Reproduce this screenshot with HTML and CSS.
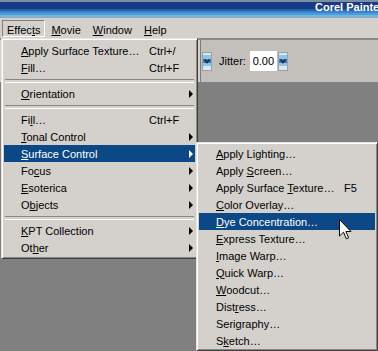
FILE: index.html
```html
<!DOCTYPE html>
<html>
<head>
<meta charset="utf-8">
<link rel="stylesheet" href="styles.css">
</head>
<body>
<div class="screen">
  <div class="titlebar"><span class="title">Corel Painter</span></div>
  <div class="menubar">
    <span class="mb pressed">Effec<u>t</u>s</span>
    <span class="mb"><u>M</u>ovie</span>
    <span class="mb"><u>W</u>indow</span>
    <span class="mb"><u>H</u>elp</span>
  </div>
  <div class="toolstrip">
    <div class="toolgap"></div>
    <div class="toolbar">
      <svg class="spin" width="10" height="19" viewBox="0 0 10 19">
        <rect width="10" height="19" fill="#dde5ee"/>
        <rect y="3" width="10" height="4" fill="#8cc6ea"/>
        <rect y="7" width="10" height="4" fill="#3f7fb8"/>
        <rect y="11" width="10" height="3" fill="#8cc6ea"/>
        <path d="M2.5 7.5 L5 10.5 L7.5 7.5" stroke="#1c2a3a" stroke-width="1.6" fill="none"/>
        <rect x="0.5" y="0.5" width="9" height="18" fill="none" stroke="#98a0a8"/>
      </svg>
      <span class="jlabel">Jitter:</span>
      <span class="field">0.00</span>
      <svg class="spin" width="10" height="19" viewBox="0 0 10 19">
        <rect width="10" height="19" fill="#dde5ee"/>
        <rect y="3" width="10" height="4" fill="#8cc6ea"/>
        <rect y="7" width="10" height="4" fill="#3f7fb8"/>
        <rect y="11" width="10" height="3" fill="#8cc6ea"/>
        <path d="M2.5 7.5 L5 10.5 L7.5 7.5" stroke="#1c2a3a" stroke-width="1.6" fill="none"/>
        <rect x="0.5" y="0.5" width="9" height="18" fill="none" stroke="#98a0a8"/>
      </svg>
    </div>
  </div>

  <div class="menu main">
    <div class="item"><span class="lbl"><u>A</u>pply Surface Texture…</span><span class="key">Ctrl+/</span></div>
    <div class="item"><span class="lbl"><u>F</u>ill…</span><span class="key">Ctrl+F</span></div>
    <div class="sep"></div>
    <div class="item"><span class="lbl"><u>O</u>rientation</span><span class="key"></span><span class="arrow"></span></div>
    <div class="sep"></div>
    <div class="item"><span class="lbl">Fi<u>l</u>l…</span><span class="key">Ctrl+F</span></div>
    <div class="item"><span class="lbl"><u>T</u>onal Control</span><span class="key"></span><span class="arrow"></span></div>
    <div class="item active"><span class="lbl"><u>S</u>urface Control</span><span class="key"></span><span class="arrow"></span></div>
    <div class="item"><span class="lbl">Fo<u>c</u>us</span><span class="key"></span><span class="arrow"></span></div>
    <div class="item"><span class="lbl"><u>E</u>soterica</span><span class="key"></span><span class="arrow"></span></div>
    <div class="item"><span class="lbl">O<u>b</u>jects</span><span class="key"></span><span class="arrow"></span></div>
    <div class="sep"></div>
    <div class="item"><span class="lbl"><u>K</u>PT Collection</span><span class="key"></span><span class="arrow"></span></div>
    <div class="item"><span class="lbl">Ot<u>h</u>er</span><span class="key"></span><span class="arrow"></span></div>
  </div>

  <div class="menu submenu">
    <div class="item"><span class="lbl"><u>A</u>pply Lighting…</span></div>
    <div class="item"><span class="lbl">Apply <u>S</u>creen…</span></div>
    <div class="item"><span class="lbl">Apply Surface <u>T</u>exture…</span><span class="key">F5</span></div>
    <div class="item"><span class="lbl"><u>C</u>olor Overlay…</span></div>
    <div class="item active"><span class="lbl"><u>D</u>ye Concentration…</span></div>
    <div class="item"><span class="lbl"><u>E</u>xpress Texture…</span></div>
    <div class="item"><span class="lbl"><u>I</u>mage Warp…</span></div>
    <div class="item"><span class="lbl"><u>Q</u>uick Warp…</span></div>
    <div class="item"><span class="lbl"><u>W</u>oodcut…</span></div>
    <div class="item"><span class="lbl">Dist<u>r</u>ess…</span></div>
    <div class="item"><span class="lbl">Seri<u>g</u>raphy…</span></div>
    <div class="item"><span class="lbl">S<u>k</u>etch…</span></div>
  </div>

  <svg class="cursor" width="13" height="21" viewBox="0 0 13 21">
    <path d="M0.5 0.5 V17 L4.5 13.2 L7.3 19.8 L9.6 18.8 L6.9 12.5 H12 Z" fill="#fff" stroke="#000"/>
  </svg>
</div>
</body>
</html>
```

FILE: styles.css
```css
* { box-sizing: border-box; }
html, body { margin: 0; padding: 0; }
body {
  width: 378px;
  height: 351px;
  overflow: hidden;
  background: #808080;
  font-family: "Liberation Sans", Arial, sans-serif;
  font-size: 11px;
  color: #000;
}
.screen {
  position: relative;
  width: 378px;
  height: 351px;
  overflow: hidden;
  background: #808080;
}
.titlebar {
  height: 18px;
  background: linear-gradient(to bottom,
    #7d8da5 0, #7d8da5 2px,
    #173a86 2px, #173a86 9px,
    #2a5dac 9px, #2a5dac 11px,
    #3a84cc 11px, #3a84cc 13px,
    #4c9cda 13px, #4c9cda 15px,
    #6cb8e8 15px, #6cb8e8 17px,
    #9aa4b2 17px, #9aa4b2 18px);
  padding-left: 315px;
  white-space: nowrap;
  overflow: hidden;
}
.title {
  color: #fff;
  font-weight: bold;
  font-size: 11px;
  line-height: 14px;
}
.menubar {
  height: 20px;
  background: #d4d1cc;
  display: flex;
  align-items: flex-start;
  padding: 2px 0 0 2px;
}
.mb {
  height: 17px;
  line-height: 19px;
  padding: 0 5px;
  border: 1px solid transparent;
  white-space: nowrap;
  overflow: visible;
}
.mb.pressed {
  padding: 0 4px;
  border-color: #808080 #fff #fff #808080;
}
.toolstrip {
  display: flex;
  height: 44px;
  border-top: 2px solid #8c8a88;
}
.toolgap {
  width: 200px;
  background: #d4d1cc;
}
.toolbar {
  flex: 1;
  background: #c3c0bc;
  border-left: 1px solid #7e7c7a;
  display: flex;
  align-items: center;
  padding-left: 1px;
}
.spin { display: block; }
.jlabel {
  margin-left: 7px;
}
.field {
  margin-left: 4px;
  margin-right: 1px;
  width: 27px;
  height: 20px;
  background: #fff;
  line-height: 20px;
  text-align: center;
}
.menu {
  position: absolute;
  background: #d4d1cc;
  border: 1px solid;
  border-color: #e6e4e0 #404040 #404040 #e6e4e0;
  box-shadow: inset 1px 1px #fff, inset -1px -1px #8a8886;
  padding: 3px 2px 2px 2px;
}
.main {
  left: 1px;
  top: 38px;
  width: 197px;
}
.submenu {
  left: 196px;
  top: 142px;
  width: 182px;
  padding: 2px 2px 1px 2px;
}
.item {
  display: flex;
  align-items: center;
  height: 17px;
  padding-left: 17px;
  padding-right: 2px;
  white-space: nowrap;
}
.item.active {
  background: #0c4886;
  color: #fff;
}
.lbl { width: 128px; flex: none; }
.key { flex: 1; }
.arrow {
  width: 0;
  height: 0;
  border-left: 4px solid #000;
  border-top: 4px solid transparent;
  border-bottom: 4px solid transparent;
}
.item.active .arrow { border-left-color: #fff; }
.sep {
  height: 9px;
  padding-top: 3px;
  margin: 0 1px;
}
.sep::before {
  content: "";
  display: block;
  height: 2px;
  border-top: 1px solid #8a8886;
  border-bottom: 1px solid #fff;
}
.cursor {
  position: absolute;
  left: 339px;
  top: 219px;
}
```
